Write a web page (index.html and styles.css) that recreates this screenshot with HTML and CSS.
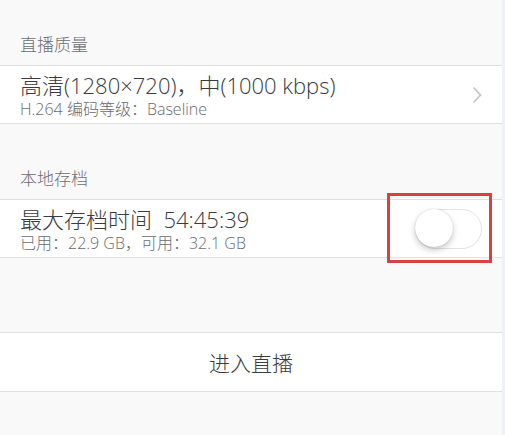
FILE: index.html
```html
<!DOCTYPE html>
<html>
<head>
	<meta charset="utf-8">
	<title>直播设置</title>
	<link rel="stylesheet" href="styles.css">
</head>
<body>
	<div class="settings">
		<div class="section">
			<div class="section-header">直播质量</div>
			<div class="cell">
				<div class="cell-text">
					<div class="cell-title">高清(1280×720)，中(1000 kbps)</div>
					<div class="cell-sub">H.264 编码等级：Baseline</div>
				</div>
				<svg class="chevron" width="10" height="18" viewBox="0 0 10 18">
					<path d="M1.5 1.5 L8.5 9 L1.5 16.5" fill="none" stroke="#c7c7cc" stroke-width="1.8"/>
				</svg>
			</div>
		</div>

		<div class="section section-archive">
			<div class="section-header">本地存档</div>
			<div class="cell">
				<div class="cell-text">
					<div class="cell-title">最大存档时间&nbsp; 54:45:39</div>
					<div class="cell-sub">已用：22.9 GB，可用：32.1 GB</div>
				</div>
				<div class="switch"><div class="knob"></div></div>
				<div class="highlight"></div>
			</div>
		</div>

		<div class="section section-action">
			<div class="cell cell-button">进入直播</div>
		</div>
	</div>
</body>
</html>
```

FILE: styles.css
```css
html, body {
	margin: 0;
	padding: 0;
}

body {
	background-color: #eef1f5;
	font-family: "Open Sans", "Noto Sans CJK SC", sans-serif;
	font-weight: 300;
	height: 435px;
	overflow: hidden;
}

.settings {
	width: 502px;
	height: 435px;
	background-color: #f9f9f9;
}

.section-header {
	padding: 35px 20px 10px;
	font-size: 17px;
	line-height: 20px;
	color: #6d6d72;
}

.section-archive .section-header {
	padding-top: 45px;
}

.section-action {
	padding-top: 74px;
}

.cell {
	position: relative;
	display: flex;
	align-items: center;
	height: 57px;
	padding: 0 20px;
	background-color: #fff;
	border-top: 1px solid #e0e0e0;
	border-bottom: 1px solid #e0e0e0;
}

.cell-text {
	flex: 1;
}

.cell-title {
	font-size: 22px;
	line-height: 28px;
	color: #3a3a40;
}

.cell-sub {
	font-size: 16px;
	line-height: 20px;
	color: #6a6a70;
}

.switch {
	position: relative;
	width: 65px;
	height: 38px;
	border: 1px solid #e3e3e3;
	border-radius: 20px;
	background-color: #fff;
	margin-top: 1px;
}

.knob {
	position: absolute;
	left: -1px;
	top: -1px;
	width: 38px;
	height: 38px;
	border-radius: 50%;
	background-color: #fff;
	box-shadow: 0 3px 6px rgba(0, 0, 0, 0.22), 0 0 1px rgba(0, 0, 0, 0.2);
}

.highlight {
	position: absolute;
	left: 387px;
	top: -7px;
	width: 105px;
	height: 70px;
	box-sizing: border-box;
	border: 3px solid #d9413f;
}

.cell-button {
	justify-content: center;
	height: 58px;
	font-size: 21px;
	color: #3a3a40;
}
```
